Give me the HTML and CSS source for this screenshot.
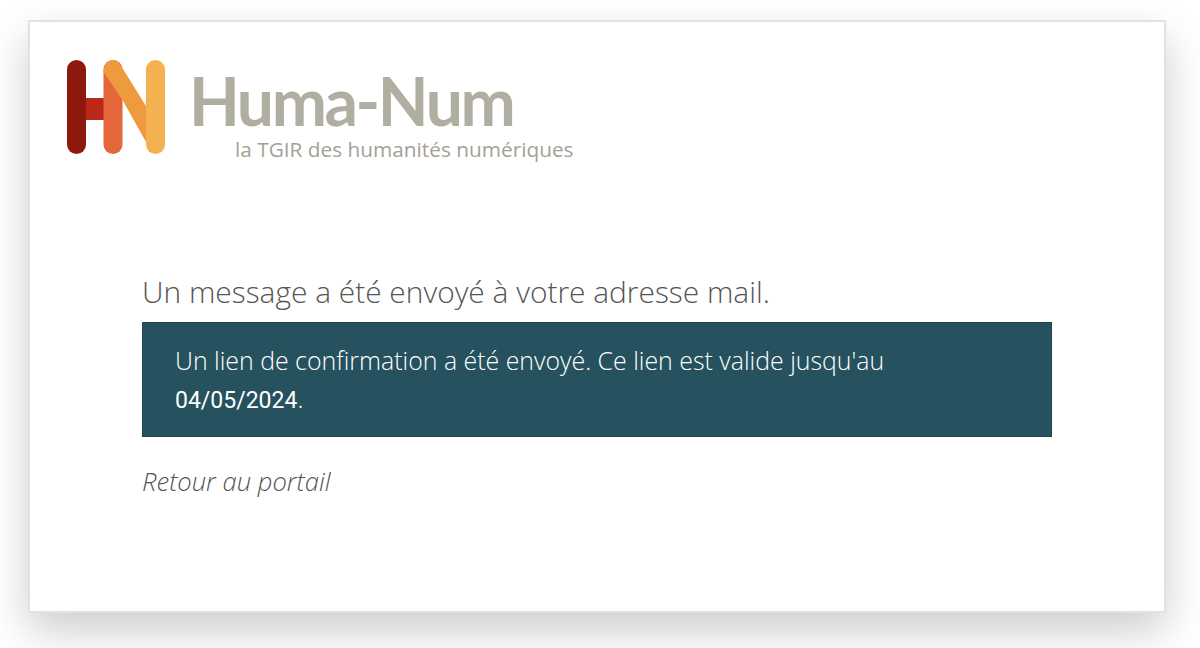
FILE: index.html
```html
<!DOCTYPE html>
<html lang="fr">
<head>
  <meta charset="UTF-8">
  <meta name="viewport" content="width=device-width, initial-scale=1.0">
  <title>Huma-Num</title>
  <link rel="stylesheet" href="styles.css">
</head>
<body>
  <main class="card">
    <header class="logo">
      <svg class="logo-mark" viewBox="0 0 100 96" width="100" height="96" aria-hidden="true">
        <rect x="17" y="38" width="21" height="22" fill="#bb2718"/>
        <rect x="0" y="0" width="19" height="94" rx="9.5" fill="#8c180e"/>
        <rect x="36.500" y="0" width="19" height="94" rx="9.500" fill="#e3673a"/>
        <path d="M36.500 12 C36.500 5 41 0 46 0 C49.500 0 52 2 53.500 5 L79 46 V82 L55.500 40 Z" fill="#ee9b3f"/>
        <rect x="79" y="0" width="19" height="94" rx="9.500" fill="#f3b14f"/>
      </svg>
      <div class="logo-text">
        <div class="logo-name">Huma-Num</div>
        <div class="logo-sub">la TGIR des humanités numériques</div>
      </div>
    </header>
    <section class="content">
      <h1>Un message a été envoyé à votre adresse mail.</h1>
      <p class="notice">Un lien de confirmation a été envoyé. Ce lien est valide jusqu'au <span class="date">04/05/2024</span>.</p>
      <a class="back" href="#">Retour au portail</a>
    </section>
  </main>
</body>
</html>
```

FILE: styles.css
```css
* { box-sizing: border-box; }

html, body {
  margin: 0;
  height: 100%;
  overflow: hidden;
  background: #fff;
}

body {
  padding: 20px 34px 35px 28px;
  font-family: "Open Sans", sans-serif;
  color: #555;
}

.card {
  height: 593px;
  background: #fff;
  border: 2px solid #e2e2e2;
  box-shadow: 0 18px 40px rgba(0, 0, 0, 0.2);
}

/* Logo */

.logo {
  display: flex;
  gap: 22px;
  height: 131px;
  padding: 38px 0 0 37px;
}

.logo-mark {
  flex: none;
}

.logo-text {
  color: #b0aea1;
}

.logo-name {
  font-family: Lato, sans-serif;
  font-size: 66px;
  font-weight: 700;
  line-height: 62px;
  letter-spacing: -2.400px;
  margin-top: 10px;
}

.logo-sub {
  font-size: 20.800px;
  line-height: 24px;
  color: #a3a196;
  margin: 5px 0 0 46px;
  white-space: nowrap;
}

/* Message */

.content {
  padding: 0 112px;
  margin-top: 118px;
}

h1 {
  margin: 0 0 9px;
  font-size: 29.900px;
  font-weight: 300;
  line-height: 42px;
}

.notice {
  margin: 0 0 28px;
  padding: 18px 140px 18px 32px;
  height: 115px;
  background: #25525e;
  border: 1px solid #1c4550;
  color: #fff;
  font-size: 24.900px;
  font-weight: 300;
  line-height: 38px;
}

.date {
  font-family: Roboto, sans-serif;
  font-size: 23px;
  font-weight: 400;
}

.back {
  color: #555;
  font-size: 25.600px;
  font-style: italic;
  font-weight: 300;
  line-height: 34px;
  text-decoration: none;
}
```
